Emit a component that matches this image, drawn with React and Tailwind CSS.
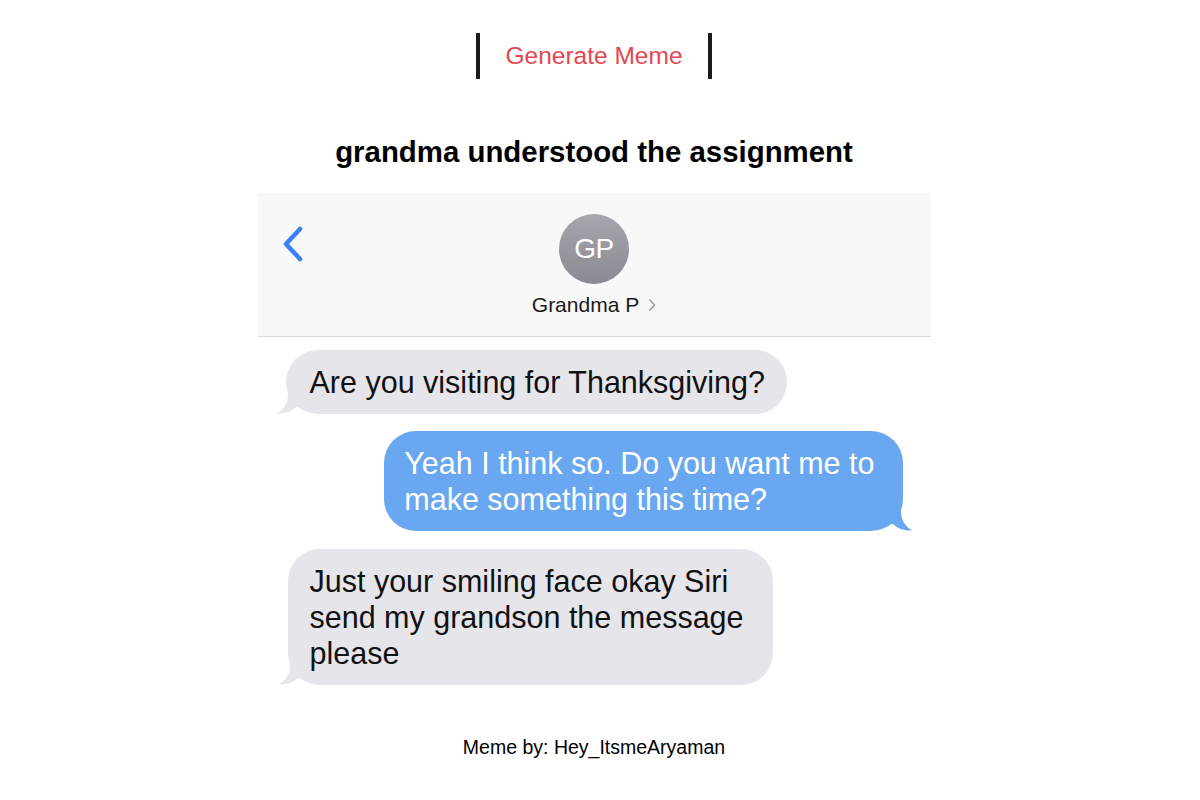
import React from "react"

const font = { fontFamily: '"Liberation Sans", Arial, Helvetica, sans-serif' }

// =========================
// BUBBLE TAILS
// =========================
function TailLeft() {
  return (
    <svg
      className="absolute -left-[9px] bottom-0"
      width="26"
      height="20"
      viewBox="0 0 26 20"
    >
      <path d="M11 0 C11 9 7 15 0 19.5 C8 20 15 17 19 13 L26 14 L26 0 Z" fill="#e5e5ea" />
    </svg>
  )
}

function TailRight() {
  return (
    <svg
      className="absolute -right-[9px] bottom-0"
      width="26"
      height="20"
      viewBox="0 0 26 20"
    >
      <path d="M15 0 C15 9 19 15 26 19.5 C18 20 11 17 7 13 L0 14 L0 0 Z" fill="#69a8f0" />
    </svg>
  )
}

export default function App() {
  return (
    <div className="min-h-screen w-full bg-white flex flex-col items-center pt-[33px] pr-[12px]" style={font}>

      {/* BUTTON */}
      <button className="h-[46px] px-[25px] border-x-4 border-[#1c1c1c] text-[24.5px] text-[#e4474f] bg-white leading-none">
        Generate Meme
      </button>

      {/* TITLE */}
      <h1 className="mt-[56px] text-[29.4px] leading-[34px] font-bold text-black">
        grandma understood the assignment
      </h1>

      {/* MEME */}
      <div className="mt-[24px] w-[673px] bg-white">

        {/* header */}
        <div className="h-[144px] bg-[#f8f8f8] border-b border-[#d9d9d9] grid grid-cols-[1fr_auto_1fr]">
          <div className="pt-[33px] pl-[24px]">
            <svg width="22" height="36" viewBox="0 0 22 36">
              <polyline
                points="18,3 4,18 18,33"
                fill="none"
                stroke="#3d7ef3"
                strokeWidth="4.5"
                strokeLinecap="round"
                strokeLinejoin="round"
              />
            </svg>
          </div>
          <div className="flex flex-col items-center pt-[21px]">
            <div className="w-[70px] h-[70px] rounded-full bg-gradient-to-b from-[#a6a6ae] to-[#8a8a93] flex items-center justify-center">
              <span className="text-white text-[28px] font-medium leading-none tracking-[-0.5px]">GP</span>
            </div>
            <div className="mt-[9px] flex items-center gap-[9px] text-[21px] leading-[24px] text-[#1a1a1a]">
              <span>Grandma P</span>
              <svg width="8" height="14" viewBox="0 0 8 14">
                <polyline points="1.5,1.5 6.5,7 1.5,12.5" fill="none" stroke="#9a9a9a" strokeWidth="1.5" />
              </svg>
            </div>
          </div>
          <div />
        </div>

        {/* messages */}
        <div className="flex flex-col pt-[13px] pb-[22px] px-[28px] gap-[17px] text-[30.5px] leading-[36px]">

          <div className="self-start">
            <div className="relative bg-[#e5e5ea] rounded-[32px] pl-[24px] pr-[22px] py-[14px] text-[#111] whitespace-nowrap">
              Are you visiting for Thanksgiving?
              <TailLeft />
            </div>
          </div>

          <div className="self-end">
            <div className="relative bg-[#69a8f0] rounded-[32px] pl-[20px] pr-[28px] py-[14px] text-white whitespace-nowrap">
              Yeah I think so. Do you want me to<br />
              make something this time?
              <TailRight />
            </div>
          </div>

          <div className="self-start ml-[2px] mt-[1px]">
            <div className="relative bg-[#e5e5ea] rounded-[32px] pl-[22px] pr-[29px] py-[14px] text-[#111] whitespace-nowrap">
              Just your smiling face okay Siri<br />
              send my grandson the message<br />
              please
              <TailLeft />
            </div>
          </div>

        </div>
      </div>

      {/* FOOTER */}
      <p className="mt-[28px] text-[19.5px] leading-[24px] text-black">
        Meme by: Hey_ItsmeAryaman
      </p>

    </div>
  )
}
